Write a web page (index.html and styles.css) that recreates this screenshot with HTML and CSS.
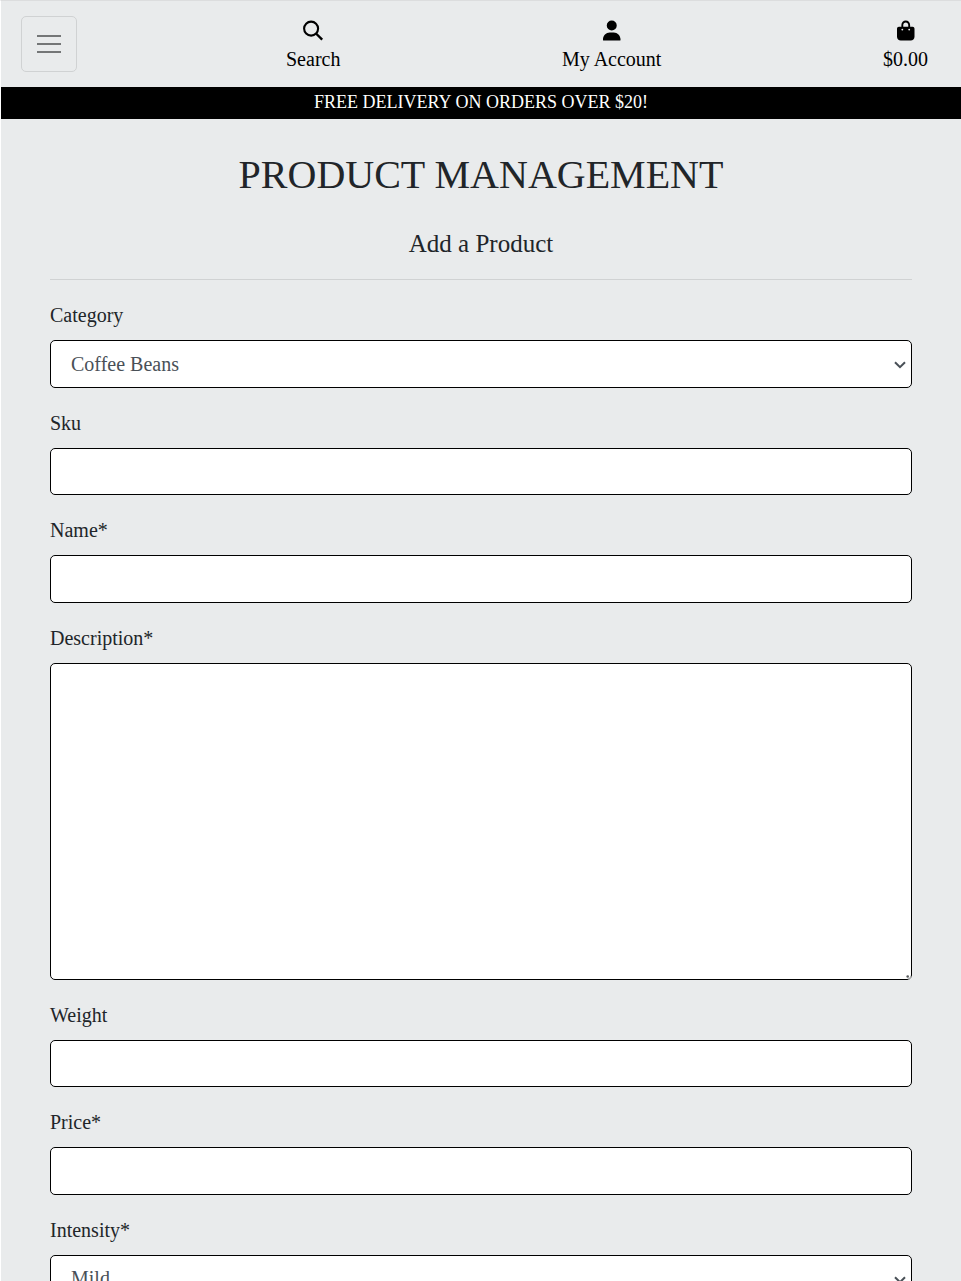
FILE: index.html
```html
<!DOCTYPE html>
<html lang="en">
<head>
<meta charset="utf-8">
<title>Product Management</title>
<link rel="stylesheet" href="styles.css">
</head>
<body>
<header class="navbar">
  <button class="toggler" type="button" aria-label="Toggle navigation">
    <svg width="38" height="38" viewBox="0 0 38 38"><path d="M7 11h24M7 19h24M7 27h24" stroke="#747677" stroke-width="2"/></svg>
  </button>
  <nav class="links">
    <a class="link" href="#">
      <svg class="icon" width="20" height="20" viewBox="0 0 20 20"><g fill="none" stroke="#000"><circle cx="8.100" cy="8.100" r="7" stroke-width="2.100"/><path d="M13 13L19.200 19.200" stroke-width="2.400"/></g></svg>
      <span>Search</span>
    </a>
    <a class="link" href="#">
      <svg class="icon" width="17.5" height="20" viewBox="0 0 448 512"><path d="M224 256A128 128 0 1 0 224 0a128 128 0 1 0 0 256zm-50 48C78 304 0 382 0 478V496c0 9 7 16 16 16H432c9 0 16-7 16-16V478C448 382 370 304 274 304H174z"/></svg>
      <span>My Account</span>
    </a>
    <a class="link" href="#">
      <svg class="icon" width="17.5" height="20" viewBox="0 0 448 512"><path d="M160 112c0-35.3 28.7-64 64-64s64 28.7 64 64v48H160V112zm-48 48H48c-26.5 0-48 21.5-48 48V416c0 53 43 96 96 96H352c53 0 96-43 96-96V208c0-26.5-21.5-48-48-48H336V112C336 50.1 285.900 0 224 0S112 50.1 112 112v48zm24 48a24 24 0 1 1 0 48 24 24 0 1 1 0-48zm152 24a24 24 0 1 1 48 0 24 24 0 1 1 -48 0z"/></svg>
      <span>$0.00</span>
    </a>
  </nav>
</header>
<div class="banner">FREE DELIVERY ON ORDERS OVER $20!</div>
<main class="content">
  <h1 class="title">PRODUCT MANAGEMENT</h1>
  <h2 class="subtitle">Add a Product</h2>
  <hr class="rule">
  <form class="form">
    <div class="group">
      <label class="label" for="category">Category</label>
      <div class="field-wrap">
        <select class="field select" id="category"><option>Coffee Beans</option></select>
        <svg class="chevron" width="12" height="8" viewBox="0 0 12 8"><path d="M1 1.200L6 6.200L11 1.200"/></svg>
      </div>
    </div>
    <div class="group">
      <label class="label" for="sku">Sku</label>
      <input class="field" id="sku" type="text">
    </div>
    <div class="group">
      <label class="label" for="name">Name*</label>
      <input class="field" id="name" type="text">
    </div>
    <div class="group">
      <label class="label" for="description">Description*</label>
      <div class="field-wrap">
        <textarea class="field area" id="description"></textarea>
        <svg class="grip" width="6" height="6" viewBox="0 0 6 6"><circle cx="1.700" cy="2.500" r="1.300" fill="#55585a"/><path d="M2.500 5.500L5.500 2.500" stroke="#a5a7a8" stroke-width="1.500"/></svg>
      </div>
    </div>
    <div class="group">
      <label class="label" for="weight">Weight</label>
      <input class="field" id="weight" type="text">
    </div>
    <div class="group">
      <label class="label" for="price">Price*</label>
      <input class="field" id="price" type="text">
    </div>
    <div class="group">
      <label class="label" for="intensity">Intensity*</label>
      <div class="field-wrap">
        <select class="field select" id="intensity"><option>Mild</option></select>
        <svg class="chevron" width="12" height="8" viewBox="0 0 12 8"><path d="M1 1.200L6 6.200L11 1.200"/></svg>
      </div>
    </div>
  </form>
</main>
</body>
</html>
```

FILE: styles.css
```css
* {
  box-sizing: border-box;
}

html {
  height: 100%;
  overflow: hidden;
  background: #e9ebec;
}

body {
  height: 100%;
  overflow: hidden;
  margin: 0;
  border-left: 1px solid #fff;
  border-top: 1px solid #dcddde;
  background: #e9ebec;
  color: #212529;
  font: 20px/30px "Liberation Serif", "Times New Roman", serif;
}

.navbar {
  display: flex;
  align-items: flex-start;
  height: 86px;
  padding: 15px 33px 0 20px;
}

.toggler {
  display: flex;
  align-items: center;
  justify-content: center;
  flex: none;
  width: 56px;
  height: 56px;
  padding: 0;
  border: 1px solid #d0d2d3;
  border-radius: 5px;
  background: transparent;
}

.links {
  display: flex;
  flex: 1;
  justify-content: space-between;
  padding: 4px 0 0 209px;
}

.link {
  display: flex;
  flex-direction: column;
  align-items: center;
  gap: 4px;
  color: #000;
  text-decoration: none;
}

.icon {
  overflow: visible;
  transform: translateY(0.5px);
}

.banner {
  height: 32px;
  background: #000;
  color: #fff;
  font-size: 18px;
  line-height: 31px;
  text-align: center;
}

.content {
  padding: 0 49px;
}

.title {
  margin: 32px 0 0;
  font-size: 40px;
  font-weight: 400;
  line-height: 48px;
  text-align: center;
}

.subtitle {
  margin: 30px 0 20px;
  font-size: 25px;
  font-weight: 400;
  line-height: 30px;
  text-align: center;
}

.rule {
  height: 1px;
  margin: 0 0 20px;
  border: 0;
  background: #d0d2d3;
}

.group {
  margin-bottom: 20px;
}

.label {
  display: block;
  margin-bottom: 10px;
}

.field {
  display: block;
  width: 100%;
  height: 47.5px;
  margin: 0;
  padding: 7px 15px;
  border: 1px solid #000;
  border-radius: 5px;
  outline: 0;
  background: #fff;
  color: #495057;
  font: inherit;
}

.area {
  height: 317px;
  resize: none;
}

.field-wrap {
  position: relative;
}

.select {
  appearance: none;
  padding-left: 20px;
}

.chevron {
  position: absolute;
  top: 21px;
  right: 6px;
  fill: none;
  stroke: #495057;
  stroke-width: 2;
  pointer-events: none;
}

.grip {
  position: absolute;
  right: 0;
  bottom: 0;
  pointer-events: none;
}
```
